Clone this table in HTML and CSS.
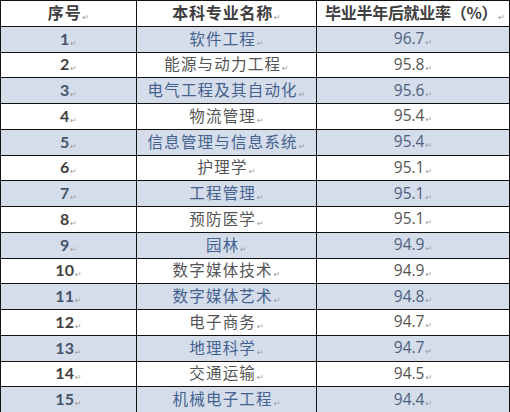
FILE: index.html
```html
<!DOCTYPE html>
<html lang="zh">
<head>
<meta charset="utf-8">
<link rel="stylesheet" href="styles.css">
</head>
<body>
<table class="rank">
  <colgroup><col class="c1"><col class="c2"><col class="c3"></colgroup>
  <thead>
    <tr><th>序号<span class="pm">↵</span></th><th class="name-h">本科专业名称<span class="pm">↵</span></th><th class="rate-h">毕业半年后就业率（%）<span class="pm">↵</span></th></tr>
  </thead>
  <tbody>
    <tr class="alt"><td class="no">1<span class="pm">↵</span></td><td>软件工程<span class="pm">↵</span></td><td class="val">96.7<span class="pm">↵</span></td></tr>
    <tr><td class="no">2<span class="pm">↵</span></td><td>能源与动力工程<span class="pm">↵</span></td><td class="val">95.8<span class="pm">↵</span></td></tr>
    <tr class="alt"><td class="no">3<span class="pm">↵</span></td><td>电气工程及其自动化<span class="pm">↵</span></td><td class="val">95.6<span class="pm">↵</span></td></tr>
    <tr><td class="no">4<span class="pm">↵</span></td><td>物流管理<span class="pm">↵</span></td><td class="val">95.4<span class="pm">↵</span></td></tr>
    <tr class="alt"><td class="no">5<span class="pm">↵</span></td><td>信息管理与信息系统<span class="pm">↵</span></td><td class="val">95.4<span class="pm">↵</span></td></tr>
    <tr><td class="no">6<span class="pm">↵</span></td><td>护理学<span class="pm">↵</span></td><td class="val">95.1<span class="pm">↵</span></td></tr>
    <tr class="alt"><td class="no">7<span class="pm">↵</span></td><td>工程管理<span class="pm">↵</span></td><td class="val">95.1<span class="pm">↵</span></td></tr>
    <tr><td class="no">8<span class="pm">↵</span></td><td>预防医学<span class="pm">↵</span></td><td class="val">95.1<span class="pm">↵</span></td></tr>
    <tr class="alt"><td class="no">9<span class="pm">↵</span></td><td>园林<span class="pm">↵</span></td><td class="val">94.9<span class="pm">↵</span></td></tr>
    <tr><td class="no">10<span class="pm">↵</span></td><td>数字媒体技术<span class="pm">↵</span></td><td class="val">94.9<span class="pm">↵</span></td></tr>
    <tr class="alt"><td class="no">11<span class="pm">↵</span></td><td>数字媒体艺术<span class="pm">↵</span></td><td class="val">94.8<span class="pm">↵</span></td></tr>
    <tr><td class="no">12<span class="pm">↵</span></td><td>电子商务<span class="pm">↵</span></td><td class="val">94.7<span class="pm">↵</span></td></tr>
    <tr class="alt"><td class="no">13<span class="pm">↵</span></td><td>地理科学<span class="pm">↵</span></td><td class="val">94.7<span class="pm">↵</span></td></tr>
    <tr><td class="no">14<span class="pm">↵</span></td><td>交通运输<span class="pm">↵</span></td><td class="val">94.5<span class="pm">↵</span></td></tr>
    <tr class="alt"><td class="no">15<span class="pm">↵</span></td><td>机械电子工程<span class="pm">↵</span></td><td class="val">94.4<span class="pm">↵</span></td></tr>
  </tbody>
</table>
</body>
</html>
```
FILE: styles.css
```css
html, body {
  margin: 0;
  padding: 0;
  background: #ffffff;
}
.rank {
  width: 509px;
  margin-left: 0;
  border-collapse: collapse;
  table-layout: fixed;
  font-family: "Noto Sans CJK SC", "Noto Sans", sans-serif;
  color: #555555;
}
.c1 { width: 136px; }
.c2 { width: 180px; }
.c3 { width: 193px; }
.rank th, .rank td {
  border: 1.5px solid #111111;
  height: 25.75px;
  padding: 0;
  text-align: center;
  vertical-align: middle;
  box-sizing: border-box;
  line-height: 1;
  white-space: nowrap;
}
.rank th {
  font-size: 16px;
  font-weight: 700;
  color: #404040;
  letter-spacing: 0.8px;
}
.rank th.rate-h {
  letter-spacing: -0.3px;
  padding-left: 4px;
}
.rank td {
  font-size: 15.5px;
  font-weight: 400;
  letter-spacing: 1.2px;
}
.rank td.no {
  font-family: "Lato", "Open Sans", sans-serif;
  font-weight: 700;
  font-size: 16px;
  color: #3f3f3f;
  letter-spacing: 0;
}
.rank td.val {
  font-family: "Open Sans", "Lato", sans-serif;
  font-size: 15.5px;
  letter-spacing: 0;
}
.rank tr.alt td {
  background: #d4dde9;
  color: #44618f;
}
.rank tr.alt td.no {
  color: #44546a;
}
.rank tr.alt td.val {
  color: #4d5f80;
}
.pm {
  font-family: "DejaVu Sans", sans-serif;
  font-size: 8px;
  font-weight: 400;
  color: #9a9a9a;
  margin-left: 1px;
  letter-spacing: 0;
  vertical-align: -1px;
}
```
